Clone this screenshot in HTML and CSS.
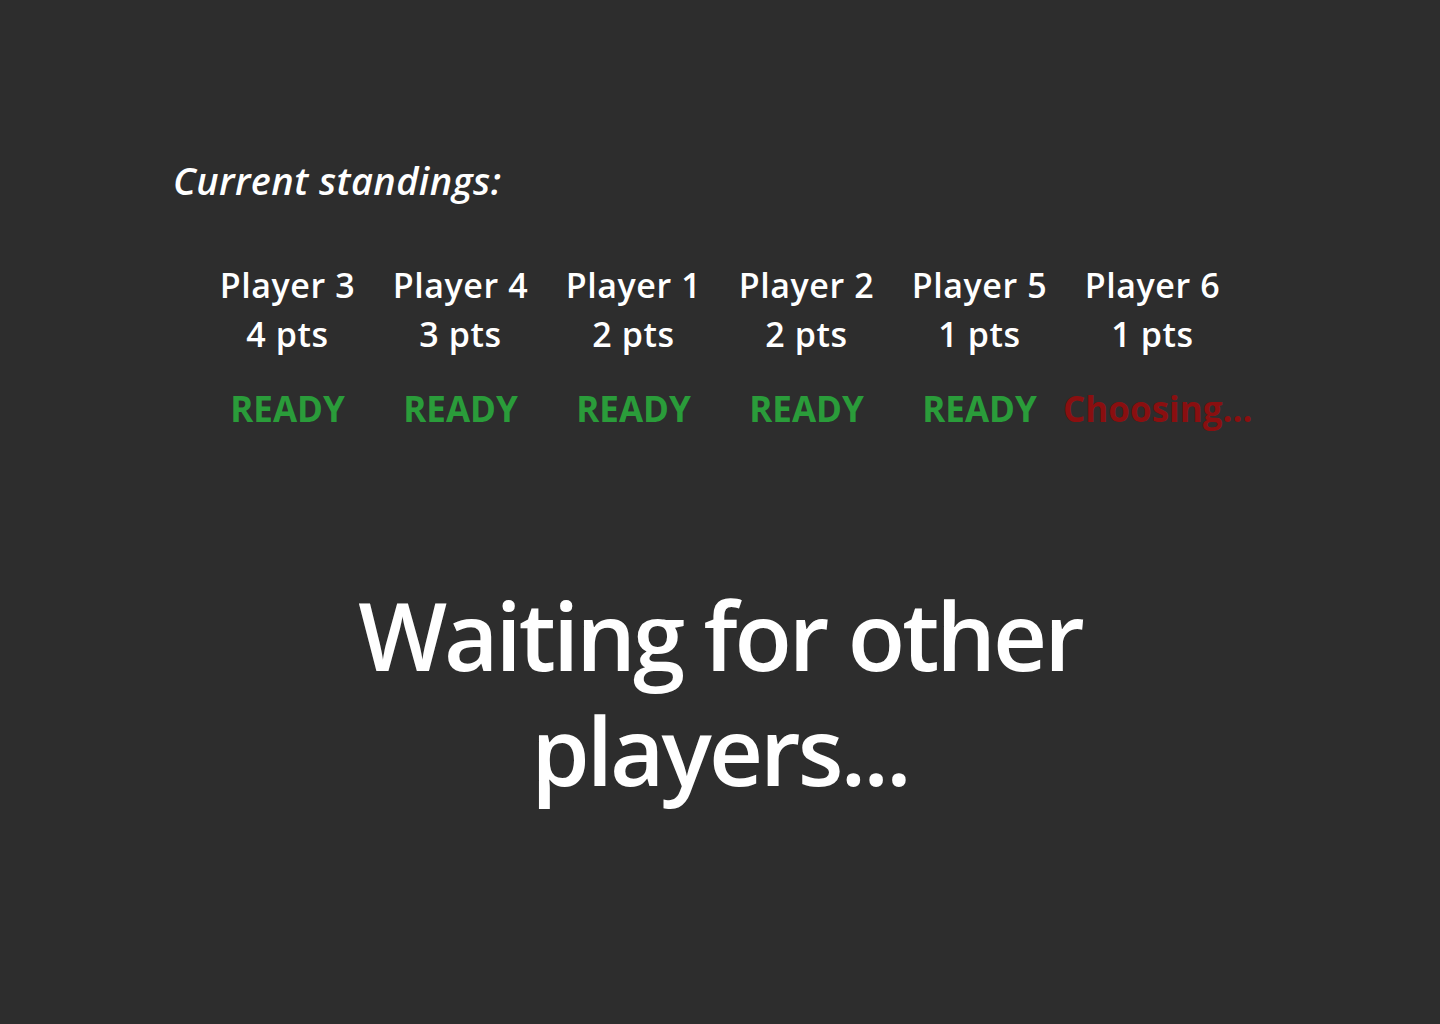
FILE: index.html
```html
<!DOCTYPE html>
<html lang="en">
<head>
<meta charset="utf-8">
<title>Waiting for other players</title>
<link rel="stylesheet" href="styles.css">
</head>
<body>
<main class="screen">
  <h2 class="standings-title">Current standings:</h2>
  <div class="standings">
    <div class="player">
      <div class="player-name">Player 3</div>
      <div class="player-score">4 pts</div>
      <div class="player-status ready">READY</div>
    </div>
    <div class="player">
      <div class="player-name">Player 4</div>
      <div class="player-score">3 pts</div>
      <div class="player-status ready">READY</div>
    </div>
    <div class="player">
      <div class="player-name">Player 1</div>
      <div class="player-score">2 pts</div>
      <div class="player-status ready">READY</div>
    </div>
    <div class="player">
      <div class="player-name">Player 2</div>
      <div class="player-score">2 pts</div>
      <div class="player-status ready">READY</div>
    </div>
    <div class="player">
      <div class="player-name">Player 5</div>
      <div class="player-score">1 pts</div>
      <div class="player-status ready">READY</div>
    </div>
    <div class="player">
      <div class="player-name">Player 6</div>
      <div class="player-score">1 pts</div>
      <div class="player-status choosing">Choosing...</div>
    </div>
  </div>
  <h1 class="waiting">Waiting for other<br>players...</h1>
</main>
</body>
</html>
```

FILE: styles.css
```css
html, body {
  margin: 0;
  padding: 0;
  background: #2d2d2d;
}

body {
  min-height: 1024px;
  font-family: "Open Sans", "Noto Sans", sans-serif;
  color: #ffffff;
}

.screen {
  display: flex;
  flex-direction: column;
  padding-top: 157px;
}

.standings-title {
  margin: 0 0 0 173px;
  font-size: 38px;
  line-height: 46px;
  font-style: italic;
  font-weight: 600;
  letter-spacing: 0.4px;
}

.standings {
  display: flex;
  justify-content: center;
  margin-top: 58px;
}

.player {
  width: 173px;
  text-align: center;
  white-space: nowrap;
  font-weight: 600;
}

.player-name,
.player-score {
  font-size: 34px;
  line-height: 49px;
  letter-spacing: 0.6px;
}

.player-status {
  margin-top: 28px;
  font-size: 35px;
  line-height: 44px;
  font-weight: 700;
  letter-spacing: 0;
}

.ready {
  color: #2a9c3a;
}

.choosing {
  color: #8a0f10;
  text-align: left;
  margin-left: -3px;
}

.waiting {
  margin: 147px 0 0;
  text-align: center;
  font-size: 94px;
  line-height: 115px;
  font-weight: 600;
  letter-spacing: -3px;
}
```
